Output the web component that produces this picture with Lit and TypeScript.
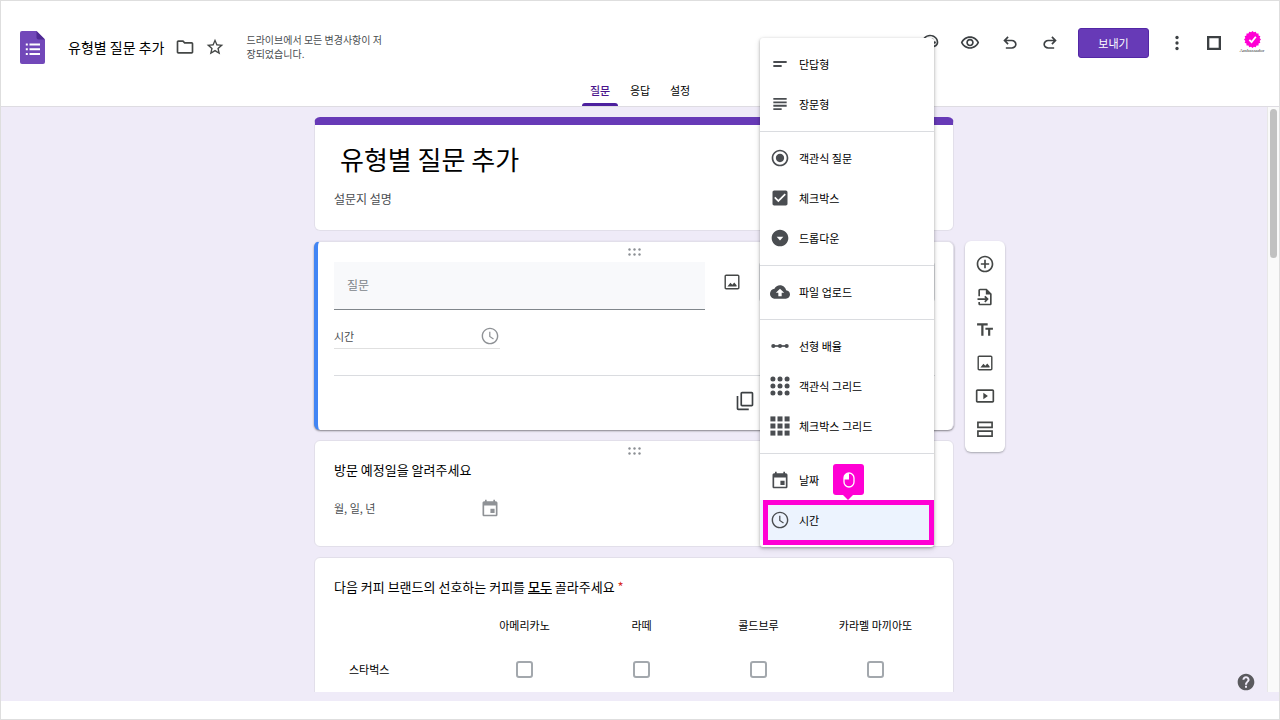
import { LitElement, html, css, svg, TemplateResult } from "lit";
import { customElement, state } from "lit/decorators.js";
import { classMap } from "lit/directives/class-map.js";

const icon = (body: TemplateResult, cls = "icon") =>
  html`<svg class=${cls} viewBox="0 0 24 24" aria-hidden="true">${body}</svg>`;

const p = (d: string) => svg`<path d=${d} />`;

const dots = [3.5, 12, 20.5];

const ICONS: Record<string, TemplateResult> = {
  folder: p("M9.17 6l2 2H20v10H4V6h5.17M10 4H4c-1.1 0-1.99.9-1.99 2L2 18c0 1.1.9 2 2 2h16c1.1 0 2-.9 2-2V8c0-1.1-.9-2-2-2h-8l-2-2z"),
  star: p("M22 9.24l-7.19-.62L12 2 9.19 8.63 2 9.24l5.46 4.73L5.82 21 12 17.27 18.18 21l-1.63-7.03L22 9.24zM12 15.4l-3.76 2.27 1-4.28-3.32-2.88 4.38-.38L12 6.1l1.71 4.04 4.38.38-3.32 2.88 1 4.28L12 15.4z"),
  palette: svg`<path d="M12 22C6.49 22 2 17.51 2 12S6.49 2 12 2s10 4.04 10 9c0 3.31-2.69 6-6 6h-1.77c-.28 0-.5.22-.5.5 0 .12.05.23.13.33.41.47.64 1.06.64 1.67A2.5 2.5 0 0 1 12 22zm0-18c-4.41 0-8 3.59-8 8s3.59 8 8 8c.28 0 .5-.22.5-.5 0-.16-.08-.28-.14-.35-.41-.46-.63-1.05-.63-1.65a2.5 2.5 0 0 1 2.5-2.5H16c2.21 0 4-1.79 4-4 0-3.86-3.59-7-8-7z" /><circle cx="6.5" cy="11.5" r="1.5" /><circle cx="9.5" cy="7.5" r="1.5" /><circle cx="14.5" cy="7.5" r="1.5" /><circle cx="17.5" cy="11.5" r="1.5" />`,
  eye: p("M12 6c3.79 0 7.17 2.13 8.82 5.5C19.17 14.87 15.79 17 12 17s-7.17-2.13-8.82-5.5C4.83 8.13 8.21 6 12 6m0-2C7 4 2.73 7.11 1 11.5 2.73 15.89 7 19 12 19s9.27-3.11 11-7.5C21.27 7.11 17 4 12 4zm0 5c1.38 0 2.5 1.12 2.5 2.5S13.38 14 12 14s-2.5-1.12-2.5-2.5S10.62 9 12 9m0-2c-2.48 0-4.5 2.02-4.5 4.5S9.52 16 12 16s4.5-2.02 4.5-4.5S14.48 7 12 7z"),
  undo: p("M7 19v-2h7.1q1.575 0 2.738-1T18 13.500 16.837 11 14.100 10H7.800l2.600 2.600L9 14 4 9l5-5 1.400 1.400L7.800 8h6.300q2.425 0 4.163 1.575T20 13.500t-1.737 3.925T14.100 19z"),
  redo: p("M17 19v-2H9.900q-1.575 0-2.738-1T6 13.500 7.163 11 9.900 10h6.300l-2.600 2.600L15 14l5-5-5-5-1.400 1.400L16.200 8H9.900Q7.475 8 5.737 9.575T4 13.500t1.737 3.925T9.900 19z"),
  more: svg`<circle cx="12" cy="5.400" r="2" /><circle cx="12" cy="12" r="2" /><circle cx="12" cy="18.600" r="2" />`,
  frame: p("M3.600 3.600v16.800h16.800V3.600zm2.800 2.800h11.200v11.200H6.400z"),
  short: p("M4 8.500h16v2.200H4zM4 13.300h10v2.200H4z"),
  long: p("M4 4.800h16V7H4zM4 8.900h16v2.200H4zM4 13h16v2.200H4zM4 17.100h10v2.200H4z"),
  radio: p("M12 7c-2.760 0-5 2.240-5 5s2.240 5 5 5 5-2.240 5-5-2.240-5-5-5zm0-5C6.480 2 2 6.480 2 12s4.480 10 10 10 10-4.480 10-10S17.520 2 12 2zm0 18c-4.420 0-8-3.580-8-8s3.580-8 8-8 8 3.580 8 8-3.580 8-8 8z"),
  check: p("M19 3H5c-1.110 0-2 .9-2 2v14c0 1.100.89 2 2 2h14c1.110 0 2-.9 2-2V5c0-1.100-.89-2-2-2zm-9 14l-5-5 1.410-1.410L10 14.170l7.590-7.590L19 8l-9 9z"),
  drop: p("M12 2C6.480 2 2 6.480 2 12s4.480 10 10 10 10-4.480 10-10S17.520 2 12 2zm0 13l-4-4.500h8z"),
  cloud: p("M19.350 10.040C18.670 6.590 15.640 4 12 4 9.110 4 6.600 5.640 5.350 8.040 2.340 8.360 0 10.910 0 14c0 3.310 2.690 6 6 6h13c2.760 0 5-2.240 5-5 0-2.640-2.050-4.780-4.650-4.960zM14 13v4h-4v-4H7l5-5 5 5h-3z"),
  scale: svg`<path d="M3 11h18v2H3z" /><circle cx="4" cy="12" r="2.500" /><circle cx="12" cy="12" r="2.500" /><circle cx="20" cy="12" r="2.500" />`,
  circles: svg`${dots.map((y) => dots.map((x) => svg`<circle cx=${x} cy=${y} r="3" />`))}`,
  squares: svg`${dots.map((y) => dots.map((x) => svg`<rect x=${x - 3} y=${y - 3} width="6" height="6" />`))}`,
  calendar: p("M19 4h-1V2h-2v2H8V2H6v2H5c-1.110 0-1.990.9-1.990 2L3 20c0 1.100.89 2 2 2h14c1.100 0 2-.9 2-2V6c0-1.100-.9-2-2-2zm0 16H5V9h14v11zM12.500 13h5v5h-5z"),
  clock: p("M11.990 2C6.470 2 2 6.480 2 12s4.470 10 9.990 10C17.520 22 22 17.520 22 12S17.520 2 11.990 2zM12 20.300c-4.600 0-8.300-3.700-8.300-8.300S7.400 3.700 12 3.700s8.300 3.700 8.300 8.300-3.700 8.300-8.300 8.300zM12.500 7H11v6l4.800 3.200.8-1.300-4.100-2.600z"),
  image: p("M19 3H5c-1.100 0-2 .9-2 2v14c0 1.100.9 2 2 2h14c1.100 0 2-.9 2-2V5c0-1.100-.9-2-2-2zm0.300 16.300H4.700V4.700h14.600zM6.500 17.500h11v-1.600l-2.800-3.200-2.300 2.700-2.300-2.400-3.600 4.500z"),
  copy: p("M16.500 23H4c-1.100 0-2-.9-2-2V6h2v15h12.500zM20 1H8.500c-1.100 0-2 .9-2 2v13.500c0 1.100.9 2 2 2H20c1.100 0 2-.9 2-2V3c0-1.100-.9-2-2-2zm0 15.500H8.500V3H20z"),
  add: p("M13 7h-2v4H7v2h4v4h2v-4h4v-2h-4V7zm-1-5C6.480 2 2 6.480 2 12s4.480 10 10 10 10-4.480 10-10S17.520 2 12 2zm0 18c-4.410 0-8-3.590-8-8s3.590-8 8-8 8 3.590 8 8-3.590 8-8 8z"),
  importDoc: p("M14 2H6c-1.100 0-2 .9-2 2v7h2V4h7v5h5v11H6v-2H4v2c0 1.100.9 2 2 2h12c1.100 0 2-.9 2-2V8l-6-6zm-1.500 8.500L11 12l1.500 1.500H3v2h9.500L11 17l1.500 1.500 4-4z"),
  text: p("M2.500 4v2.600h5v12.400h2.700V6.600h5V4zm19 5.200h-9v2.500h3.200v7.300h2.600v-7.300h3.200z"),
  video: p("M10 8v8l5.500-4zM21 4H3c-1.100 0-2 .9-2 2v12c0 1.100.9 2 2 2h18c1.100 0 2-.9 2-2V6c0-1.100-.9-2-2-2zm0 14H3V6h18z"),
  section: p("M2.500 3v8h19V3zm17 6h-15V5h15zM2.500 13.500v8h19v-8zm17 6h-15v-4h15z"),
  help: p("M12 2C6.480 2 2 6.480 2 12s4.480 10 10 10 10-4.480 10-10S17.520 2 12 2zm1.200 17h-2.400v-2.400h2.400V19zm2.300-7.600l-.9.920c-.8.800-1.300 1.480-1.300 2.980h-2.500v-.6c0-1.100.5-2.100 1.300-2.800l1.200-1.300c.4-.3.600-.8.600-1.300 0-1.100-.9-1.900-1.900-1.900s-1.900.8-1.900 1.900H7.700c0-2.300 1.900-4.300 4.300-4.300s4.300 1.900 4.300 4.300c0 .8-.3 1.600-.8 2.100z"),
};

const MENU: [string, string][][] = [
  [["short", "단답형"], ["long", "장문형"]],
  [["radio", "객관식 질문"], ["check", "체크박스"], ["drop", "드롭다운"]],
  [["cloud", "파일 업로드"]],
  [["scale", "선형 배율"], ["circles", "객관식 그리드"], ["squares", "체크박스 그리드"]],
  [["calendar", "날짜"], ["clock", "시간"]],
];

const shared = css`
  * {
    box-sizing: border-box;
  }
  button {
    font: inherit;
    color: inherit;
    background: none;
    border: 0;
    padding: 0;
    cursor: pointer;
  }
  .icon {
    display: block;
    width: 20px;
    height: 20px;
    fill: currentColor;
  }
`;

@customElement("form-header")
class FormHeader extends LitElement {
  static styles = [
    shared,
    css`
      :host {
        display: block;
        background: #fff;
        border-bottom: 1px solid #dedce2;
      }
      .bar {
        display: flex;
        justify-content: space-between;
        align-items: flex-start;
        padding: 24px 16px 9px 19px;
      }
      .left {
        display: flex;
        align-items: center;
        height: 44px;
      }
      .logo {
        display: block;
        width: 25px;
        height: 33px;
      }
      .title {
        margin: 0 11px 0 23px;
        font-size: 14px;
        line-height: 20px;
        font-weight: 400;
        color: #000;
      }
      .pair {
        display: flex;
        gap: 10px;
        color: #444746;
      }
      .status {
        margin: 0 0 0 21px;
        width: 136px;
        font-size: 10px;
        line-height: 14px;
        color: #4a4d51;
        word-break: break-all;
      }
      .right {
        display: flex;
        align-items: center;
        gap: 18px;
        height: 36px;
        color: #3c4043;
      }
      .tools {
        display: flex;
        gap: 20px;
      }
      .account {
        display: flex;
        align-items: center;
        gap: 17px;
      }
      .send {
        width: 71px;
        height: 30px;
        border: 1px solid #5227a5;
        border-radius: 3px;
        background: #673ab7;
        color: #fff;
        font-size: 11px;
      }
      .avatar {
        display: flex;
        flex-direction: column;
        align-items: center;
        width: 22px;
        height: 24px;
        color: #333;
        font-family: "Liberation Serif", serif;
        font-size: 5px;
        line-height: 5px;
      }
      .badge {
        display: block;
        flex: none;
        width: 17px;
        height: 17px;
      }
      .tabs {
        display: flex;
        justify-content: center;
        height: 28px;
      }
      .tab {
        width: 40px;
        padding: 0 2px;
        font-size: 11px;
        color: #000;
        display: flex;
        flex-direction: column;
        justify-content: space-between;
        text-align: center;
      }
      .label {
        line-height: 24px;
      }
      .tab.on {
        color: #4a148c;
        font-weight: 500;
      }
      .tab.on::after {
        content: "";
        height: 3px;
        border-radius: 3px 3px 0 0;
        background: #4c1f9e;
      }
    `,
  ];

  @state() tab = "질문";

  render() {
    const scallops = Array.from({ length: 32 }, (_, i) => {
      const a = (i * Math.PI) / 16;
      const r = i % 2 ? 10.3 : 12;
      return `${(12 + r * Math.cos(a)).toFixed(2)},${(12 + r * Math.sin(a)).toFixed(2)}`;
    }).join(" ");
    return html`
      <div class="bar">
        <div class="left">
          <svg class="logo" viewBox="0 0 25 33" aria-hidden="true">
            <path fill="#7248b9" d="M2 0h14.500L25 8.500V31a2 2 0 0 1-2 2H2a2 2 0 0 1-2-2V2a2 2 0 0 1 2-2z" />
            <path fill="#4f2a93" d="M16.500 0L25 8.500h-6.500a2 2 0 0 1-2-2z" />
            <path fill="#fff" d="M9.500 12.500H20v2H9.500zM9.500 17.200H20v2H9.500zM9.500 22H20v2H9.500zM5.800 12.500h2v2h-2zM5.800 17.200h2v2h-2zM5.800 22h2v2h-2z" />
          </svg>
          <h1 class="title">유형별 질문 추가</h1>
          <div class="pair">
            <button aria-label="폴더로 이동">${icon(ICONS.folder)}</button>
            <button aria-label="별표">${icon(ICONS.star)}</button>
          </div>
          <p class="status">드라이브에서 모든 변경사항이 저장되었습니다.</p>
        </div>
        <div class="right">
          <div class="tools">
            <button aria-label="테마 맞춤설정">${icon(ICONS.palette)}</button>
            <button aria-label="미리보기">${icon(ICONS.eye)}</button>
            <button aria-label="실행취소">${icon(ICONS.undo)}</button>
            <button aria-label="재실행">${icon(ICONS.redo)}</button>
          </div>
          <button class="send">보내기</button>
          <div class="account">
            <button aria-label="더보기">${icon(ICONS.more)}</button>
            <button aria-label="앱">${icon(ICONS.frame)}</button>
            <button class="avatar" aria-label="계정">
              <svg class="badge" viewBox="0 0 24 24" aria-hidden="true">
                <polygon fill="#ff00d4" points=${scallops} />
                <path fill="none" stroke="#fff" stroke-width="2.500" d="M7.500 12.500l3.200 3.200 6-7.500" />
              </svg>
              Ambassador
            </button>
          </div>
        </div>
      </div>
      <nav class="tabs">
        ${["질문", "응답", "설정"].map(
          (t) => html`<button class=${classMap({ tab: true, on: t === this.tab })} @click=${() => (this.tab = t)}>
            <span class="label">${t}</span>
          </button>`
        )}
      </nav>
    `;
  }
}

@customElement("type-menu")
class TypeMenu extends LitElement {
  static styles = [
    shared,
    css`
      :host {
        display: block;
        padding: 6px 0 7px;
        background: #fff;
        border-radius: 3px;
        box-shadow: 0 1px 3px rgba(0, 0, 0, 0.3), 0 2px 6px rgba(0, 0, 0, 0.12);
      }
      .group + .group {
        margin-top: 7px;
        padding-top: 6px;
        border-top: 1px solid #dadce0;
      }
      .item {
        position: relative;
        display: flex;
        align-items: center;
        gap: 9px;
        width: 100%;
        height: 40px;
        padding: 0 10px;
        color: #4a4d51;
      }
      .name {
        font-size: 11px;
        color: #000;
      }
      .item.on {
        background: #ecf3fe;
      }
      .ring {
        position: absolute;
        inset: 0 0 -5px 3px;
        border: 5px solid #ff00d4;
      }
      .tip {
        position: absolute;
        left: 73px;
        bottom: calc(100% + 5px);
        display: grid;
        place-items: center;
        width: 31px;
        height: 31px;
        border-radius: 3px;
        background: #ff00d4;
      }
      .tip::after {
        content: "";
        position: absolute;
        top: 100%;
        left: 10px;
        border: 5px solid transparent;
        border-top-color: #ff00d4;
        border-bottom: 0;
      }
      .mouse {
        width: 12px;
        height: 16px;
      }
    `,
  ];

  @state() value = "시간";

  render() {
    return MENU.map(
      (group) => html`<div class="group">
        ${group.map(
          ([key, name]) => html`<button
            class=${classMap({ item: true, on: name === this.value })}
            @click=${() => (this.value = name)}
          >
            ${icon(ICONS[key])}<span class="name">${name}</span>
            ${name === this.value
              ? html`<span class="ring"></span>
                  <span class="tip">
                    <svg class="mouse" viewBox="0 0 12 16" aria-hidden="true">
                      <rect x="1" y="1" width="10" height="14" rx="5" fill="none" stroke="#fff" stroke-width="1.300" />
                      <path d="M6 1v6.500H1V6a5 5 0 0 1 5-5z" fill="#fff" />
                    </svg>
                  </span>`
              : ""}
          </button>`
        )}
      </div>`
    );
  }
}

@customElement("app-root")
class AppRoot extends LitElement {
  static styles = [
    shared,
    css`
      :host {
        display: flex;
        flex-direction: column;
        box-sizing: border-box;
        height: 100vh;
        border: 1px solid #dedede;
        overflow: hidden;
        background: #fff;
        font-family: "Noto Sans CJK KR", "Noto Sans", sans-serif;
        color: #000;
      }
      .stage {
        flex: 1;
        min-height: 0;
        display: grid;
        grid-template-columns: 1fr 640px 1fr 12px;
        grid-template-rows: 100%;
        background: #efebf8;
      }
      .column {
        grid-column: 2;
        position: relative;
        min-height: 0;
      }
      .cards {
        height: 100%;
        display: flex;
        flex-direction: column;
        gap: 10px;
        padding-top: 10px;
        overflow-x: visible;
        overflow-y: clip;
      }
      .card {
        flex: none;
        padding: 0 19px;
        background: #fff;
        border: 1px solid #e2dfea;
        border-radius: 6px;
      }
      .intro {
        border-top: 8px solid #673ab7;
        padding: 14px 19px 21px;
      }
      .heading {
        margin: 0 0 10px 6px;
        font-size: 26px;
        line-height: 40px;
        font-weight: 400;
      }
      .desc {
        margin: 0;
        font-size: 12px;
        line-height: 20px;
        color: #4a4d51;
      }
      .active {
        border-left: 4px solid #4285f4;
        padding: 0 18px 0 16px;
        border-bottom: 0;
        box-shadow: 0 1px 2px rgba(0, 0, 0, 0.45);
      }
      .handle {
        display: flex;
        justify-content: center;
        align-items: center;
        height: 20px;
      }
      .grip {
        width: 13px;
        height: 8px;
        fill: #8b8f94;
      }
      .edit {
        display: flex;
        align-items: flex-start;
        gap: 17px;
      }
      .question {
        flex: 1;
        min-width: 0;
        height: 48px;
        padding: 0 13px 2px;
        border: 0;
        border-bottom: 1px solid #80868b;
        background: #f8f9fb;
        font: inherit;
        font-size: 12px;
      }
      .question::placeholder {
        color: #80868b;
        opacity: 1;
      }
      .add-image {
        margin-top: 10px;
        color: #444746;
      }
      .kind {
        width: 176px;
        height: 40px;
        border: 1px solid #dadce0;
        border-radius: 3px;
        background: #fff;
        font: inherit;
        font-size: 11px;
      }
      .answer {
        display: flex;
        justify-content: space-between;
        align-items: center;
        width: 166px;
        height: 25px;
        margin: 14px 0 26px;
        border-bottom: 1px solid #e0e0e0;
        font-size: 11px;
        color: #4a4d51;
      }
      .pale {
        color: #8f9296;
      }
      .actions {
        display: flex;
        justify-content: flex-end;
        align-items: center;
        height: 55px;
        padding: 0 180px 5px 0;
        border-top: 1px solid #dadce0;
        color: #3c4043;
      }
      .name {
        margin: 0;
        font-size: 13px;
        line-height: 18px;
        font-weight: 400;
      }
      .name u {
        font-weight: 500;
      }
      .date {
        display: flex;
        justify-content: space-between;
        align-items: center;
        width: 166px;
        height: 20px;
        margin: 19px 0 28px;
        font-size: 11px;
        color: #4a4d51;
      }
      .matrix {
        padding-top: 20px;
        padding-bottom: 60px;
      }
      .required {
        color: #d93025;
      }
      .grid {
        width: 100%;
        margin-top: 7px;
        border-collapse: collapse;
        table-layout: fixed;
        font-size: 11px;
      }
      .grid th {
        height: 44px;
        padding: 0;
        font-weight: 400;
      }
      .grid td {
        height: 44px;
        padding: 0;
        text-align: center;
      }
      .grid .option {
        width: 117px;
      }
      .grid .row {
        padding-left: 15px;
        text-align: left;
      }
      .box {
        appearance: none;
        display: block;
        width: 17px;
        height: 17px;
        margin: 0 auto;
        border: 2px solid #a3a8ad;
        border-radius: 3px;
        background: #fff;
      }
      .box:checked {
        background: #673ab7;
      }
      .menu {
        position: absolute;
        top: -69px;
        right: 20px;
        width: 174px;
        z-index: 2;
      }
      .side {
        grid-column: 3;
        position: relative;
      }
      .rail {
        display: flex;
        flex-direction: column;
        align-items: center;
        gap: 13px;
        width: 40px;
        margin: 134px 0 0 11px;
        padding: 13px 0;
        border-radius: 6px;
        background: #fff;
        box-shadow: 0 1px 2px rgba(60, 64, 67, 0.4);
        color: #444746;
      }
      .help {
        position: absolute;
        right: 11px;
        bottom: 0;
        color: #5a5a5e;
      }
      .track {
        grid-column: 4;
        padding: 2px 2px 0;
        background: #fafafa;
        border-left: 1px solid #e8e8e8;
      }
      .thumb {
        height: 149px;
        border-radius: 4px;
        background: #c1c1c1;
      }
      .foot {
        height: 27px;
        border-top: 9px solid #efebf8;
      }
    `,
  ];

  private grip() {
    return html`<div class="handle">
      <svg class="grip" viewBox="0 0 13 8" aria-hidden="true">
        ${[1.5, 6.5].map((y) => [1.5, 6.5, 11.5].map((x) => svg`<circle cx=${x} cy=${y} r="1.200" />`))}
      </svg>
    </div>`;
  }

  render() {
    const options = ["아메리카노", "라떼", "콜드브루", "카라멜 마끼아또"];
    const rail: [string, string][] = [
      ["add", "질문 추가"],
      ["importDoc", "질문 가져오기"],
      ["text", "제목 및 설명 추가"],
      ["image", "이미지 추가"],
      ["video", "동영상 추가"],
      ["section", "섹션 추가"],
    ];
    return html`
      <form-header></form-header>
      <main class="stage">
        <div class="column">
          <div class="cards">
            <section class="card intro">
              <h2 class="heading">유형별 질문 추가</h2>
              <p class="desc">설문지 설명</p>
            </section>
            <section class="card active">
              ${this.grip()}
              <div class="edit">
                <input class="question" type="text" placeholder="질문" aria-label="질문" />
                <button class="add-image" aria-label="이미지 추가">${icon(ICONS.image)}</button>
                <select class="kind" aria-label="질문 유형">
                  ${MENU.flat().map(([, name]) => html`<option ?selected=${name === "시간"}>${name}</option>`)}
                </select>
              </div>
              <div class="answer"><span>시간</span><span class="pale">${icon(ICONS.clock)}</span></div>
              <div class="actions"><button aria-label="복사">${icon(ICONS.copy)}</button></div>
            </section>
            <section class="card">
              ${this.grip()}
              <h3 class="name">방문 예정일을 알려주세요</h3>
              <div class="date"><span>월, 일, 년</span><span class="pale">${icon(ICONS.calendar)}</span></div>
            </section>
            <section class="card matrix">
              <h3 class="name">
                다음 커피 브랜드의 선호하는 커피를 <u>모두</u> 골라주세요 <span class="required">*</span>
              </h3>
              <table class="grid">
                <thead>
                  <tr>
                    <th></th>
                    ${options.map((o) => html`<th class="option" scope="col">${o}</th>`)}
                  </tr>
                </thead>
                <tbody>
                  <tr>
                    <th class="row" scope="row">스타벅스</th>
                    ${options.map(
                      (o) => html`<td><input class="box" type="checkbox" aria-label=${`스타벅스 ${o}`} /></td>`
                    )}
                  </tr>
                </tbody>
              </table>
            </section>
          </div>
          <type-menu class="menu"></type-menu>
        </div>
        <div class="side">
          <div class="rail">
            ${rail.map(([key, label]) => html`<button aria-label=${label}>${icon(ICONS[key])}</button>`)}
          </div>
          <button class="help" aria-label="도움말">${icon(ICONS.help)}</button>
        </div>
        <div class="track"><div class="thumb"></div></div>
      </main>
      <div class="foot"></div>
    `;
  }
}
